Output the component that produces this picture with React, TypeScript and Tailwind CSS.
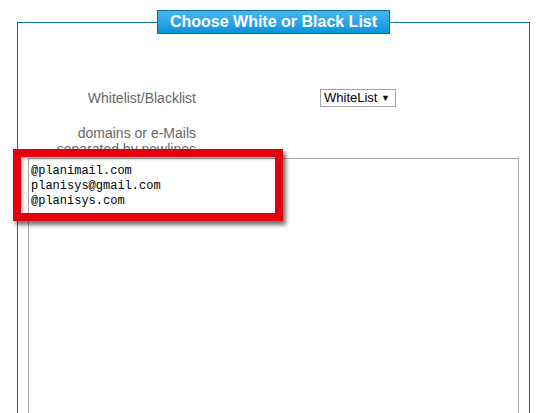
export default function App() {
  return (
    <div className="relative min-h-screen bg-white font-['Liberation_Sans',Arial,sans-serif]">
      {/* List settings panel */}
      <div className="pl-[17px] pr-[15px] pt-[10px]">
        <fieldset className="border border-[#0b6f9b] px-[10px] pb-0 min-w-0">
          <legend className="mx-auto w-[233px] h-[24px] border border-[#0a6c9c] bg-gradient-to-b from-[#45b6f2] to-[#0593dd] text-center text-[16px] leading-[22px] font-bold text-white">
            Choose White or Black List
          </legend>

          <div className="mt-[55px] flex items-center h-[18px]">
            <div className="w-[168px] text-right text-[14px] leading-[16px] text-[#686868]">
              Whitelist/Blacklist
            </div>
            <div className="ml-[124px] flex items-center justify-between w-[76px] h-[18px] border border-[#a6a6a6] pl-[3px] pr-[5px] text-[13px] leading-[16px] text-black">
              <span>WhiteList</span>
              <span className="text-[9px]">▼</span>
            </div>
          </div>

          <div className="mt-[18px] w-[168px] text-right text-[14px] leading-[16px] text-[#686868]">
            domains or e-Mails
            <br />
            separated by newlines
          </div>

          <textarea
            readOnly
            defaultValue={"@planimail.com\nplanisys@gmail.com\n@planisys.com"}
            className="mt-px block w-full h-[260px] resize-none border border-[#a9a9a9] px-[2px] pt-[5px] font-['Liberation_Mono','DejaVu_Sans_Mono',monospace] text-[12px] leading-[15px] text-black outline-none"
          />
        </fieldset>
      </div>

      {/* Red highlight annotation */}
      <div className="absolute left-[13px] top-[149px] w-[270px] h-[72px] border-[8px] border-[#e0000f] shadow-[3px_4px_4px_rgba(0,0,0,0.55),inset_2px_2px_3px_rgba(0,0,0,0.3)]" />
    </div>
  );
}
